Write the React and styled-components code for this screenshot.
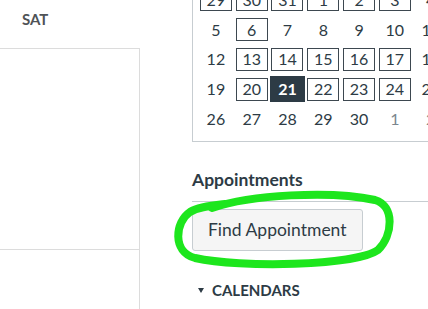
import styled, { createGlobalStyle } from "styled-components";

const GlobalStyle = createGlobalStyle`
  html, body {
    margin: 0;
    padding: 0;
    background: #fff;
    overflow: hidden;
  }
`;

const Page = styled.div`
  position: relative;
  display: flex;
  width: 428px;
  height: 309px;
  overflow: hidden;
  background: #fff;
  font-family: Lato, "Liberation Sans", sans-serif;
  color: #2d3b45;
`;

/* left side: month grid */
const MonthPane = styled.div`
  width: 140px;
  flex-shrink: 0;
  display: flex;
  flex-direction: column;
`;

const DayHeader = styled.div`
  height: 48px;
  box-sizing: border-box;
  padding: 10px 0 0 22px;
  font-size: 15px;
  line-height: 18px;
  font-weight: 700;
  color: #4f5357;
`;

const MonthBody = styled.div`
  flex: 1;
  border-top: 1px solid #dcdcdc;
  border-right: 1px solid #dcdcdc;
`;

const WeekRow = styled.div`
  height: 201px;
  box-sizing: border-box;
  border-bottom: 1px solid #dcdcdc;
`;

/* right side: sidebar */
const Sidebar = styled.div`
  flex: 1;
  min-width: 0;
  padding-left: 52px;
  display: flex;
  flex-direction: column;
`;

const MiniCal = styled.div`
  flex-shrink: 0;
  align-self: flex-start;
  margin-top: -24px;
  border: 1px solid #c7cdd1;
  padding: 8px 5px 7px;
  display: grid;
  grid-template-columns: repeat(7, 35.8px);
  grid-auto-rows: 29.75px;
`;

const DayCell = styled.div`
  display: flex;
  align-items: center;
  justify-content: center;
`;

const DayNum = styled.span`
  display: flex;
  align-items: center;
  justify-content: center;
  box-sizing: border-box;
  font-size: 16px;
  line-height: 1;
  color: ${(p) => (p.$kind === "muted" ? "#7b868e" : "#2d3b45")};
  ${(p) =>
    p.$kind === "outlined" &&
    `
    width: 32px;
    height: 23px;
    border: 1px solid #3d4850;
  `}
  ${(p) =>
    p.$kind === "selected" &&
    `
    width: 35px;
    height: 26px;
    background: #2d3b45;
    color: #fff;
    font-weight: 700;
  `}
`;

const SectionTitle = styled.h2`
  margin: 28px 0 0;
  padding-bottom: 11px;
  border-bottom: 1px solid #c7cdd1;
  font-size: 17.5px;
  line-height: 20px;
  font-weight: 700;
  color: #2d3b45;
`;

const FindButton = styled.button`
  align-self: flex-start;
  margin-top: 7px;
  height: 42px;
  box-sizing: border-box;
  padding: 0 15px;
  background: #f5f5f5;
  border: 1px solid #c7cdd1;
  border-radius: 3px;
  font-family: inherit;
  font-size: 17.5px;
  color: #2d3b45;
`;

const ToggleHeader = styled.div`
  margin-top: 29px;
  display: flex;
  align-items: center;
  gap: 8px;
  padding-left: 6px;
  font-size: 15px;
  line-height: 20px;
  font-weight: 700;
  color: #2d3b45;
`;

const Caret = styled.span`
  width: 0;
  height: 0;
  border-left: 3.5px solid transparent;
  border-right: 3.5px solid transparent;
  border-top: 5px solid #2d3b45;
  margin-top: 1px;
`;

const Scribble = styled.svg`
  position: absolute;
  left: 0;
  top: 0;
  pointer-events: none;
`;

const weeks = [
  [["29", "outlined"], ["30", "outlined"], ["31", "outlined"], ["1", "outlined"], ["2", "outlined"], ["3", "outlined"], ["4"]],
  [["5"], ["6", "outlined"], ["7"], ["8"], ["9"], ["10"], ["11"]],
  [["12"], ["13", "outlined"], ["14", "outlined"], ["15", "outlined"], ["16", "outlined"], ["17", "outlined"], ["18"]],
  [["19"], ["20", "outlined"], ["21", "selected"], ["22", "outlined"], ["23", "outlined"], ["24", "outlined"], ["25"]],
  [["26"], ["27"], ["28"], ["29"], ["30"], ["1", "muted"], ["2", "muted"]],
];

export default function App() {
  return (
    <>
      <GlobalStyle />
      <Page>
        <MonthPane>
          <DayHeader>SAT</DayHeader>
          <MonthBody>
            <WeekRow />
          </MonthBody>
        </MonthPane>

        <Sidebar>
          <MiniCal>
            {weeks.flat().map(([day, kind], i) => (
              <DayCell key={i}>
                <DayNum $kind={kind}>{day}</DayNum>
              </DayCell>
            ))}
          </MiniCal>

          <SectionTitle>Appointments</SectionTitle>
          <FindButton type="button">Find Appointment</FindButton>

          <ToggleHeader>
            <Caret />
            CALENDARS
          </ToggleHeader>
        </Sidebar>

        {/* hand-drawn highlight around the button */}
        <Scribble width="428" height="309" viewBox="0 0 428 309">
          <path
            d="M 212 208 C 250 195, 330 190, 375 200 C 395 206, 393 235, 378 250 C 355 266, 240 268, 195 258 C 172 252, 175 222, 190 212 C 200 206, 215 205, 225 204"
            fill="none"
            stroke="#1de61d"
            strokeWidth="8"
            strokeLinecap="round"
            strokeLinejoin="round"
          />
        </Scribble>
      </Page>
    </>
  );
}
